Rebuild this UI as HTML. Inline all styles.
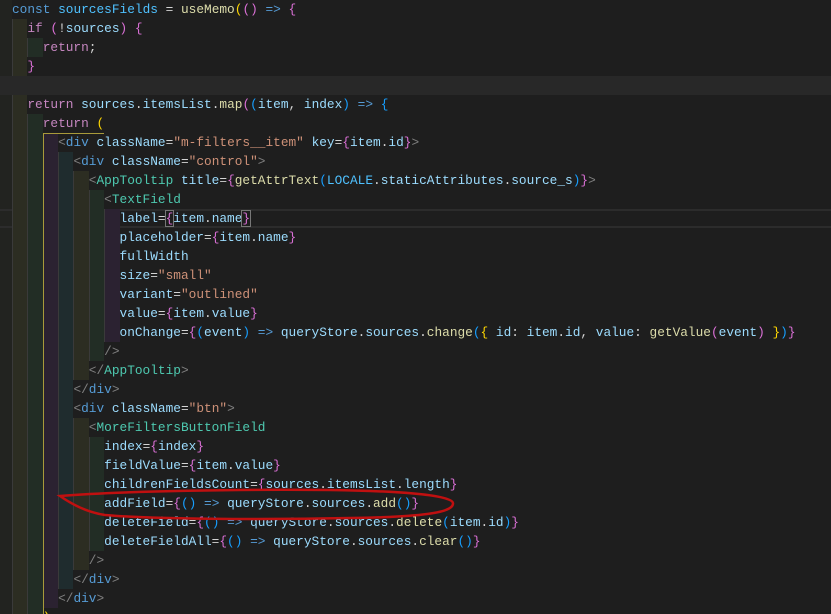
<!DOCTYPE html>
<html><head><meta charset="utf-8"><style>
html,body{margin:0;padding:0;background:#1e1e1e;width:831px;height:614px;overflow:hidden}
#c{position:relative;font-family:"Liberation Mono",monospace;font-size:12.8px;line-height:19px;color:#d4d4d4}
.l{height:19px;white-space:pre;padding-left:12px;position:relative}
.i{display:inline-block;width:15.36px;height:19px;vertical-align:top;box-shadow:inset 1px 0 0 #3a3a3a}
.i1{background:#2c2d22}.i2{background:#222d25}.i3{background:#2b2231}.i4{background:#1f2c2e}
.k{color:#569cd6}.c{color:#c586c0}.v{color:#9cdcfe}.f{color:#dcdcaa}.s{color:#ce9178}.t{color:#4ec9b0}.p{color:#808080}.y{color:#ffd700}.o{color:#da70d6}.b{color:#179fff}.cv{color:#4fc1ff}
</style></head><body>
<div id="c">
<div style="position:absolute;left:0;top:0;width:12px;height:614px;background:#222320"></div>
<div style="position:absolute;left:0;top:76px;width:831px;height:19px;background:#282828"></div>
<div style="position:absolute;left:0;top:209px;width:831px;height:19px;border-top:2px solid #2c2c2c;border-bottom:2px solid #2c2c2c;box-sizing:border-box"></div>
<div style="position:relative;z-index:1">
<div class="l"><span class="k">const</span> <span class="cv">sourcesFields</span> = <span class="f">useMemo</span><span class="y">(</span><span class="o">()</span> <span class="k">=&gt;</span> <span class="o">{</span></div>
<div class="l"><span class="i i1"></span><span class="c">if</span> <span class="o">(</span>!<span class="v">sources</span><span class="o">)</span> <span class="o">{</span></div>
<div class="l"><span class="i i1"></span><span class="i i2"></span><span class="c">return</span>;</div>
<div class="l"><span class="i i1"></span><span class="o">}</span></div>
<div class="l"></div>
<div class="l"><span class="i i1"></span><span class="c">return</span> <span class="v">sources</span>.<span class="v">itemsList</span>.<span class="f">map</span><span class="o">(</span><span class="b">(</span><span class="v">item</span>, <span class="v">index</span><span class="b">)</span> <span class="k">=&gt;</span> <span class="b">{</span></div>
<div class="l"><span class="i i1"></span><span class="i i2"></span><span class="c">return</span> <span class="y">(</span></div>
<div class="l"><span class="i i1"></span><span class="i i2"></span><span class="i i3"></span><span class="p">&lt;</span><span class="k">div</span> <span class="v">className</span>=<span class="s">"m-filters__item"</span> <span class="v">key</span>=<span class="o">{</span><span class="v">item</span>.<span class="v">id</span><span class="o">}</span><span class="p">&gt;</span></div>
<div class="l"><span class="i i1"></span><span class="i i2"></span><span class="i i3"></span><span class="i i4"></span><span class="p">&lt;</span><span class="k">div</span> <span class="v">className</span>=<span class="s">"control"</span><span class="p">&gt;</span></div>
<div class="l"><span class="i i1"></span><span class="i i2"></span><span class="i i3"></span><span class="i i4"></span><span class="i i1"></span><span class="p">&lt;</span><span class="t">AppTooltip</span> <span class="v">title</span>=<span class="o">{</span><span class="f">getAttrText</span><span class="b">(</span><span class="cv">LOCALE</span>.<span class="v">staticAttributes</span>.<span class="v">source_s</span><span class="b">)</span><span class="o">}</span><span class="p">&gt;</span></div>
<div class="l"><span class="i i1"></span><span class="i i2"></span><span class="i i3"></span><span class="i i4"></span><span class="i i1"></span><span class="i i2"></span><span class="p">&lt;</span><span class="t">TextField</span></div>
<div class="l"><span class="i i1"></span><span class="i i2"></span><span class="i i3"></span><span class="i i4"></span><span class="i i1"></span><span class="i i2"></span><span class="i i3"></span><span class="v">label</span>=<span class="o" style="outline:1px solid #777">{</span><span class="v">item</span>.<span class="v">name</span><span class="o" style="outline:1px solid #777">}</span></div>
<div class="l"><span class="i i1"></span><span class="i i2"></span><span class="i i3"></span><span class="i i4"></span><span class="i i1"></span><span class="i i2"></span><span class="i i3"></span><span class="v">placeholder</span>=<span class="o">{</span><span class="v">item</span>.<span class="v">name</span><span class="o">}</span></div>
<div class="l"><span class="i i1"></span><span class="i i2"></span><span class="i i3"></span><span class="i i4"></span><span class="i i1"></span><span class="i i2"></span><span class="i i3"></span><span class="v">fullWidth</span></div>
<div class="l"><span class="i i1"></span><span class="i i2"></span><span class="i i3"></span><span class="i i4"></span><span class="i i1"></span><span class="i i2"></span><span class="i i3"></span><span class="v">size</span>=<span class="s">"small"</span></div>
<div class="l"><span class="i i1"></span><span class="i i2"></span><span class="i i3"></span><span class="i i4"></span><span class="i i1"></span><span class="i i2"></span><span class="i i3"></span><span class="v">variant</span>=<span class="s">"outlined"</span></div>
<div class="l"><span class="i i1"></span><span class="i i2"></span><span class="i i3"></span><span class="i i4"></span><span class="i i1"></span><span class="i i2"></span><span class="i i3"></span><span class="v">value</span>=<span class="o">{</span><span class="v">item</span>.<span class="v">value</span><span class="o">}</span></div>
<div class="l"><span class="i i1"></span><span class="i i2"></span><span class="i i3"></span><span class="i i4"></span><span class="i i1"></span><span class="i i2"></span><span class="i i3"></span><span class="v">onChange</span>=<span class="o">{</span><span class="b">(</span><span class="v">event</span><span class="b">)</span> <span class="k">=&gt;</span> <span class="v">queryStore</span>.<span class="v">sources</span>.<span class="f">change</span><span class="b">(</span><span class="y">{</span> <span class="v">id</span>: <span class="v">item</span>.<span class="v">id</span>, <span class="v">value</span>: <span class="f">getValue</span><span class="o">(</span><span class="v">event</span><span class="o">)</span> <span class="y">}</span><span class="b">)</span><span class="o">}</span></div>
<div class="l"><span class="i i1"></span><span class="i i2"></span><span class="i i3"></span><span class="i i4"></span><span class="i i1"></span><span class="i i2"></span><span class="p">/&gt;</span></div>
<div class="l"><span class="i i1"></span><span class="i i2"></span><span class="i i3"></span><span class="i i4"></span><span class="i i1"></span><span class="p">&lt;/</span><span class="t">AppTooltip</span><span class="p">&gt;</span></div>
<div class="l"><span class="i i1"></span><span class="i i2"></span><span class="i i3"></span><span class="i i4"></span><span class="p">&lt;/</span><span class="k">div</span><span class="p">&gt;</span></div>
<div class="l"><span class="i i1"></span><span class="i i2"></span><span class="i i3"></span><span class="i i4"></span><span class="p">&lt;</span><span class="k">div</span> <span class="v">className</span>=<span class="s">"btn"</span><span class="p">&gt;</span></div>
<div class="l"><span class="i i1"></span><span class="i i2"></span><span class="i i3"></span><span class="i i4"></span><span class="i i1"></span><span class="p">&lt;</span><span class="t">MoreFiltersButtonField</span></div>
<div class="l"><span class="i i1"></span><span class="i i2"></span><span class="i i3"></span><span class="i i4"></span><span class="i i1"></span><span class="i i2"></span><span class="v">index</span>=<span class="o">{</span><span class="v">index</span><span class="o">}</span></div>
<div class="l"><span class="i i1"></span><span class="i i2"></span><span class="i i3"></span><span class="i i4"></span><span class="i i1"></span><span class="i i2"></span><span class="v">fieldValue</span>=<span class="o">{</span><span class="v">item</span>.<span class="v">value</span><span class="o">}</span></div>
<div class="l"><span class="i i1"></span><span class="i i2"></span><span class="i i3"></span><span class="i i4"></span><span class="i i1"></span><span class="i i2"></span><span class="v">childrenFieldsCount</span>=<span class="o">{</span><span class="v">sources</span>.<span class="v">itemsList</span>.<span class="v">length</span><span class="o">}</span></div>
<div class="l"><span class="i i1"></span><span class="i i2"></span><span class="i i3"></span><span class="i i4"></span><span class="i i1"></span><span class="i i2"></span><span class="v">addField</span>=<span class="o">{</span><span class="b">()</span> <span class="k">=&gt;</span> <span class="v">queryStore</span>.<span class="v">sources</span>.<span class="f">add</span><span class="b">()</span><span class="o">}</span></div>
<div class="l"><span class="i i1"></span><span class="i i2"></span><span class="i i3"></span><span class="i i4"></span><span class="i i1"></span><span class="i i2"></span><span class="v">deleteField</span>=<span class="o">{</span><span class="b">()</span> <span class="k">=&gt;</span> <span class="v">queryStore</span>.<span class="v">sources</span>.<span class="f">delete</span><span class="b">(</span><span class="v">item</span>.<span class="v">id</span><span class="b">)</span><span class="o">}</span></div>
<div class="l"><span class="i i1"></span><span class="i i2"></span><span class="i i3"></span><span class="i i4"></span><span class="i i1"></span><span class="i i2"></span><span class="v">deleteFieldAll</span>=<span class="o">{</span><span class="b">()</span> <span class="k">=&gt;</span> <span class="v">queryStore</span>.<span class="v">sources</span>.<span class="f">clear</span><span class="b">()</span><span class="o">}</span></div>
<div class="l"><span class="i i1"></span><span class="i i2"></span><span class="i i3"></span><span class="i i4"></span><span class="i i1"></span><span class="p">/&gt;</span></div>
<div class="l"><span class="i i1"></span><span class="i i2"></span><span class="i i3"></span><span class="i i4"></span><span class="p">&lt;/</span><span class="k">div</span><span class="p">&gt;</span></div>
<div class="l"><span class="i i1"></span><span class="i i2"></span><span class="i i3"></span><span class="p">&lt;/</span><span class="k">div</span><span class="p">&gt;</span></div>
<div class="l"><span class="i i1"></span><span class="i i2"></span><span class="y">)</span></div>
</div>
<div style="position:absolute;z-index:2;left:43px;top:133px;width:60px;height:481px;border-left:1px solid #a89a3a;border-top:1px solid #a89a3a"></div>
<svg style="position:absolute;z-index:3;left:0;top:0" width="831" height="614">
<path d="M60,496 C120,491 250,489 330,490 C400,491 452,495 453,503 C454,513 420,517 350,518 C260,520 150,519 105,515 C85,512 70,503 60,496 Z" fill="none" stroke="#c01010" stroke-width="2.5"/>
</svg>
</div>
</body></html>
